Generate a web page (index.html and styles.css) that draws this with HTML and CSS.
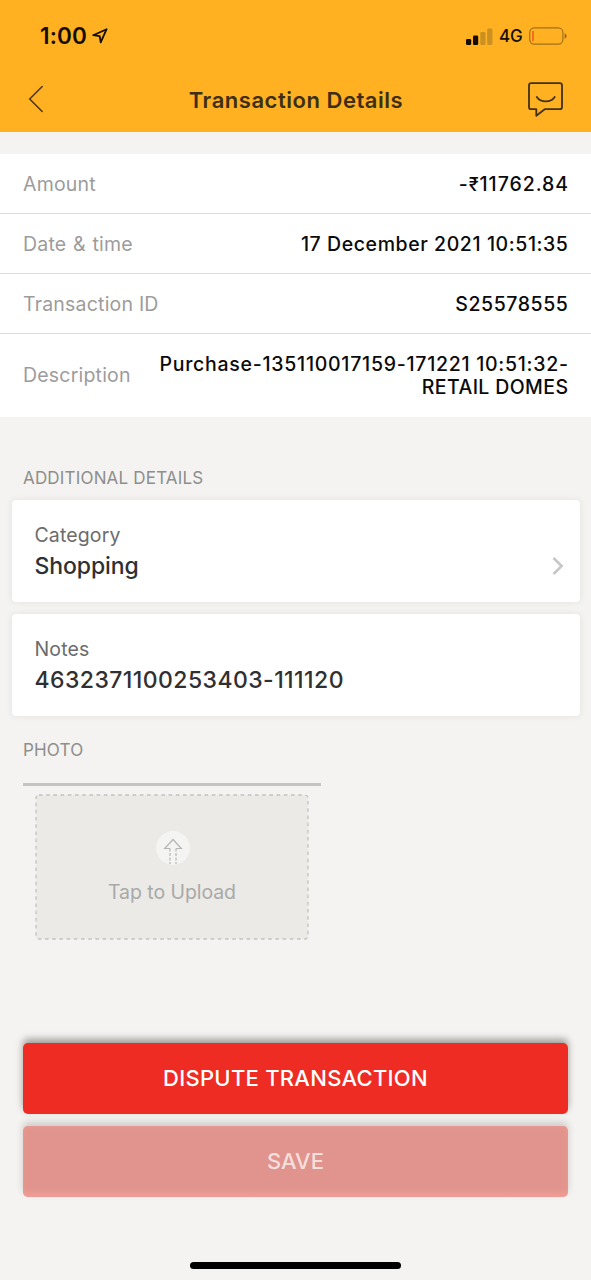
FILE: index.html
```html
<!DOCTYPE html>
<html lang="en">
<head>
<meta charset="utf-8">
<title>Transaction Details</title>
<meta name="viewport" content="width=device-width">
<link rel="stylesheet" href="styles.css">
</head>
<body>
<div class="screen">
  <header class="header">
    <div class="status">
      <span class="clock">1:00</span>
      <svg class="locate" width="16" height="16" viewBox="0 0 16 16"><path d="M1.2 7.2 14.6 1.2 8.7 14.4 7.7 8.2Z" fill="none" stroke="#140d00" stroke-width="1.8" stroke-linejoin="round"/></svg>
      <svg class="signal" width="28" height="17" viewBox="0 0 28 17"><rect x="0" y="11" width="5.2" height="6" rx="1.3" fill="#140d00"/><rect x="7" y="7.6" width="5.2" height="9.4" rx="1.3" fill="#140d00"/><rect x="14.3" y="4" width="5.2" height="13" rx="1.3" fill="#cb9022"/><rect x="21.2" y="0.4" width="5.2" height="16.6" rx="1.3" fill="#cb9022"/></svg>
      <span class="network">4G</span>
      <svg class="battery" width="38" height="18" viewBox="0 0 38 18"><rect x="0.7" y="0.8" width="33.2" height="16.4" rx="4.6" fill="none" stroke="#a3711a" stroke-width="1.2"/><path d="M4 4.5v9" stroke="#f4511e" stroke-width="1.4" stroke-linecap="round"/><path d="M35.6 6.2C38.200 7.200 38.200 10.800 35.600 11.800Z" fill="#94661a"/></svg>
    </div>
    <div class="nav">
      <svg class="back" width="16" height="28" viewBox="0 0 16 28"><path d="M14.200 1.500 1.700 14 14.200 26.500" fill="none" stroke="#4a3616" stroke-width="1.500" stroke-linecap="round"/></svg>
      <h1 class="title">Transaction Details</h1>
      <svg class="chat" width="36" height="36" viewBox="0 0 36 36"><path d="M3.300 1.200H31.700Q34 1.200 34 3.500V24.900Q34 27.200 31.700 27.200H16.700L8.300 33.700V27.200H3.300Q1 27.200 1 24.900V3.500Q1 1.200 3.300 1.200Z" fill="none" stroke="#413119" stroke-width="1.800" stroke-linejoin="round"/><path d="M8.800 15C12.500 20.700 23 20.700 26.700 15" fill="none" stroke="#413119" stroke-width="1.800" stroke-linecap="round"/></svg>
    </div>
  </header>
  <dl class="details">
    <div class="row"><dt>Amount</dt><dd class="v-amount">-<span class="rupee">₹</span>11762.84</dd></div>
    <div class="row"><dt class="k-date">Date &amp; time</dt><dd class="v-date">17 December 2021 10:51:35</dd></div>
    <div class="row"><dt>Transaction ID</dt><dd class="v-id">S25578555</dd></div>
    <div class="row row-tall"><dt>Description</dt><dd><span class="v-line">Purchase-135110017159-171221 10:51:32-</span><span class="v-store">RETAIL DOMES</span></dd></div>
  </dl>
  <h2 class="section additional">ADDITIONAL DETAILS</h2>
  <section class="card">
    <div><div class="label">Category</div><div class="value">Shopping</div></div>
    <svg class="chevron" width="14" height="20" viewBox="0 0 14 20"><path d="M2.500 2 10.700 10 2.500 18" fill="none" stroke="#c6c6c6" stroke-width="2.500"/></svg>
  </section>
  <section class="card">
    <div><div class="label">Notes</div><div class="value notes">4632371100253403-111120</div></div>
  </section>
  <h2 class="section photo">PHOTO</h2>
  <div class="rule"></div>
  <div class="upload">
    <svg class="frame" width="274" height="146" viewBox="0 0 274 146"><rect x="1" y="1" width="272" height="144" rx="3" fill="#ebeae7" stroke="#c2c2bf" stroke-width="1.300" stroke-dasharray="3.600 3.600"/></svg>
    <svg class="arrow" width="34" height="34" viewBox="0 0 34 34"><circle cx="17" cy="17" r="16.900" fill="#f4f4f3"/><path d="M14 17.500H8.700L17 8.500 25.300 17.500H20" fill="none" stroke="#b5b5b3" stroke-width="1.200"/><path d="M14 17.500V33M20 17.500V33" fill="none" stroke="#b5b5b3" stroke-width="1.200" stroke-dasharray="3 1.500"/></svg>
    <span class="tap">Tap to Upload</span>
  </div>
  <div class="actions">
    <button class="btn btn-dispute">DISPUTE TRANSACTION</button>
    <button class="btn btn-disabled">SAVE</button>
  </div>
  <div class="home"></div>
</div>
</body>
</html>
```
FILE: styles.css
```css
* { box-sizing: border-box; }
body { margin: 0; font-family: Inter, "Liberation Sans", sans-serif; background: #f4f3f1; }
svg { flex: none; }
.screen { width: 591px; height: 1280px; overflow: hidden; display: flex; flex-direction: column; }
.header { height: 131.500px; background: #ffb121; flex: none; margin-bottom: 22.500px; }
.status { height: 72px; display: flex; align-items: center; padding: 0 24px 0 40px; color: #140d00; }
.clock { font-size: 22.5px; font-weight: 600; line-height: 28px; width: 52px; white-space: nowrap; letter-spacing: .15px; }
.locate { margin-right: auto; }
.signal { margin-right: 5px; }
.network { font-size: 17px; font-weight: 500; width: 30px; white-space: nowrap; letter-spacing: -.2px; }
.nav { height: 59px; display: flex; align-items: center; justify-content: space-between; padding: 0 27px 0 28px; }
.back { margin-top: -5px; }
.title { margin: -3px 0 0 20px; font-size: 22px; line-height: 28px; font-weight: 600; color: #3d2e17; white-space: nowrap; letter-spacing: .53px; }
.chat { margin-top: -4px; }
.details { margin: 0; background: #fff; flex: none; }
.row { height: 60px; display: flex; align-items: center; justify-content: space-between; padding: 2px 23px 0; border-bottom: 1px solid #dcdcdb; font-size: 19.5px; line-height: 23.500px; white-space: nowrap; }
.row-tall { height: 83px; border: 0; padding-top: 1px; }
.row dt { color: #9c9c9c; letter-spacing: .2px; }
.row .k-date { word-spacing: 1px; }
.row dd { margin: 0; color: #0b0b0b; font-weight: 500; text-align: right; }
.row .v-amount { letter-spacing: .95px; margin-right: -1px; }
.row .v-date { letter-spacing: .58px; margin-right: -.5px; }
.row .v-id { letter-spacing: .58px; margin-right: -.5px; }
.v-line { display: block; letter-spacing: .73px; margin-right: -.7px; }
.v-store { display: block; letter-spacing: .38px; margin-right: -.4px; }
.rupee { font-size: 18px; }
.section { margin: 0 0 0 23px; font-size: 17px; font-weight: 400; line-height: 22px; color: #8e8e8c; white-space: nowrap; letter-spacing: .18px; }
.additional { margin-top: 50px; margin-bottom: 11px; }
.card { margin: 0 11.500px 12px; height: 102px; flex: none; background: #fff; border-radius: 4px; box-shadow: 0 0 6px rgba(60,60,40,.09); display: flex; justify-content: space-between; padding: 22px 15px 0 23px; }
.label { font-size: 19.500px; line-height: 26px; color: #6c6c6c; letter-spacing: .13px; }
.value { font-size: 23px; line-height: 30px; margin-top: 2.500px; font-weight: 500; color: #303032; letter-spacing: -.1px; }
.notes { letter-spacing: .43px; }
.chevron { margin-top: 34px; }
.photo { margin-top: 11px; }
.rule { width: 298px; height: 3px; margin: 22px 0 0 23px; background: #c4c4c2; flex: none; }
.upload { position: relative; width: 274px; height: 146px; margin: 8px 0 0 35px; flex: none; display: flex; flex-direction: column; align-items: center; padding-top: 36.500px; }
.frame { position: absolute; left: 0; top: 0; }
.arrow, .tap { position: relative; }
.arrow { margin-left: 1px; }
.tap { margin-top: 14px; font-size: 19.500px; line-height: 26px; color: #a9a9a7; letter-spacing: -.07px; }
.actions { margin: 103px 23px 0; display: flex; flex-direction: column; gap: 12px; }
.btn { height: 71px; border: 0; border-radius: 5px; background: #ee2c24; color: #fff; font: 500 22px/28px Inter, "Liberation Sans", sans-serif; box-shadow: 0 -4px 7px rgba(50,50,45,.45); padding: 0 0 2px; }
.btn-dispute { letter-spacing: .27px; }
.btn-disabled { background: linear-gradient(#e1948d 0, #e1948d 88%, #ed9c95 97%); color: #f3dfdb; box-shadow: 0 -4px 7px rgba(50,50,45,.2), inset 0 0 5px #ed9c95; }
.home { width: 211px; height: 7px; border-radius: 4px; background: #000; margin: 65px auto 0; flex: none; }
```
